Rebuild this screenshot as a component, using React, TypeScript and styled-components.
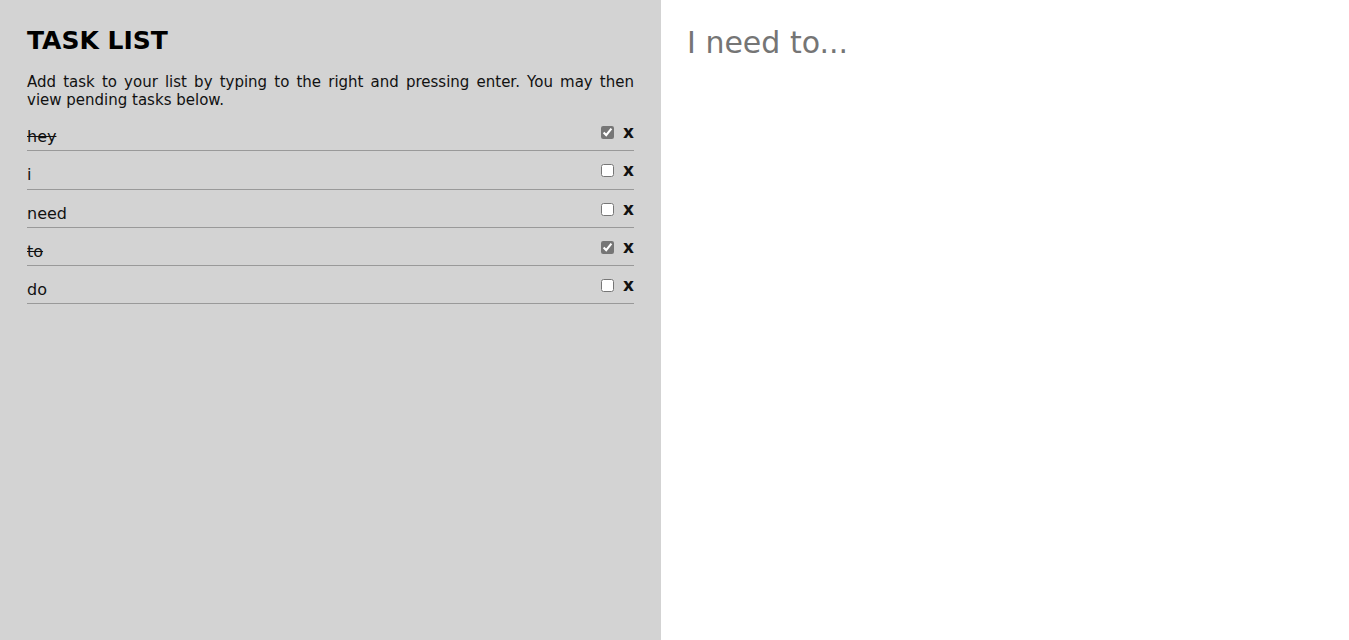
import React, { useState } from "react";
import styled, { createGlobalStyle } from "styled-components";

const Global = createGlobalStyle`
  html, body { margin: 0; padding: 0; height: 100%; }
  body { font-family: "DejaVu Sans", Verdana, sans-serif; background: #fff; }
  #root { height: 100%; }
`;

const Page = styled.div`
  display: flex;
  height: 640px;
`;

const Sidebar = styled.aside`
  width: 49%;
  box-sizing: border-box;
  background: #d3d3d3;
  padding: 26px 27px 0 27px;
`;

const Title = styled.h1`
  margin: 0;
  font-size: 25px;
  line-height: 29px;
  font-weight: bold;
  color: #000;
`;

const Intro = styled.p`
  margin: 18px 0 0;
  font-size: 15px;
  line-height: 18px;
  text-align: justify;
  color: #111;
`;

const List = styled.ul`
  list-style: none;
  margin: 0;
  padding: 0;
`;

const Item = styled.li`
  display: flex;
  align-items: flex-start;
  justify-content: space-between;
  padding: 14px 0 4.25px;
  line-height: 19px;
  font-size: 16px;
  border-bottom: 1px solid #999;
  color: #111;
  &:first-child { padding-top: 18px; }
`;

const Label = styled.span<{ $done: boolean }>`
  text-decoration: ${(p) => (p.$done ? "line-through" : "none")};
`;

const Controls = styled.div`
  display: flex;
  align-items: center;
  gap: 9px;
  margin-top: -4px;
`;

const Check = styled.input`
  width: 13px;
  height: 13px;
  margin: 0;
  accent-color: #767676;
`;

const Remove = styled.button`
  border: 0;
  background: none;
  padding: 0;
  font-family: "DejaVu Sans", Verdana, sans-serif;
  font-weight: bold;
  font-size: 17px;
  line-height: 19px;
  color: #111;
  cursor: pointer;
`;

const Main = styled.main`
  flex: 1;
  background: #fff;
  padding: 23px 26px 0;
`;

const Entry = styled.input`
  border: 0;
  outline: none;
  width: 100%;
  font-family: "DejaVu Sans", Verdana, sans-serif;
  font-size: 30px;
  line-height: 40px;
  padding: 0;
  color: #333;
  background: transparent;
  &::placeholder { color: #757575; }
`;

const initial = [
  { text: "hey", done: true },
  { text: "i", done: false },
  { text: "need", done: false },
  { text: "to", done: true },
  { text: "do", done: false },
];

export default function App() {
  const [tasks, setTasks] = useState(initial);
  const [value, setValue] = useState("");
  return (
    <Page>
      <Global />
      <Sidebar>
        <Title>TASK LIST</Title>
        <Intro>
          Add task to your list by typing to the right and pressing enter. You may then view pending tasks below.
        </Intro>
        <List>
          {tasks.map((t, i) => (
            <Item key={i}>
              <Label $done={t.done}>{t.text}</Label>
              <Controls>
                <Check
                  type="checkbox"
                  checked={t.done}
                  onChange={() =>
                    setTasks(tasks.map((x, j) => (j === i ? { ...x, done: !x.done } : x)))
                  }
                />
                <Remove onClick={() => setTasks(tasks.filter((_, j) => j !== i))}>x</Remove>
              </Controls>
            </Item>
          ))}
        </List>
      </Sidebar>
      <Main>
        <Entry
          placeholder="I need to..."
          value={value}
          onChange={(e) => setValue(e.target.value)}
          onKeyDown={(e) => {
            if (e.key === "Enter" && value.trim()) {
              setTasks([...tasks, { text: value.trim(), done: false }]);
              setValue("");
            }
          }}
        />
      </Main>
    </Page>
  );
}
